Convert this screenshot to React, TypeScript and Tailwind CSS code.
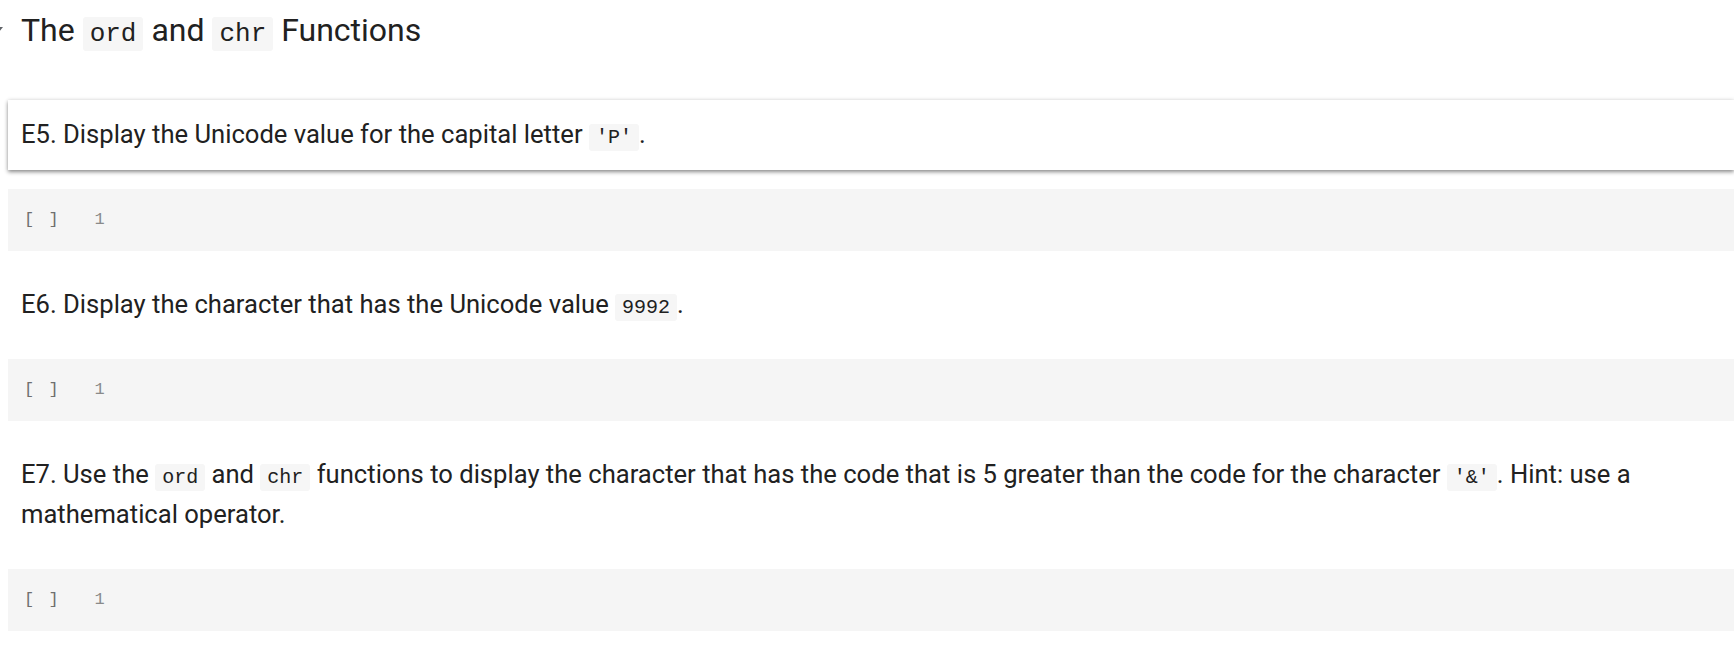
import React from 'react';

const mono = "font-['Liberation_Mono','DejaVu_Sans_Mono',monospace]";

function Code({ children, big }: { children: React.ReactNode; big?: boolean }) {
    return (
        <code
            className={`${mono} bg-[#f6f6f6] rounded-[3px] ${
                big ? 'text-[26px] leading-[28px] px-[7px] py-[2px]' : 'text-[20px] leading-[22px] px-[7px] py-[2px]'
            }`}
        >
            {children}
        </code>
    );
}

function TextCell({ children, selected }: { children: React.ReactNode; selected?: boolean }) {
    return (
        <div
            className={`ml-[8px] pl-[13px] pr-2 pt-[14px] pb-[16px] text-[25.6px] leading-[40px] text-[#212121] ${
                selected ? 'bg-white shadow-[0_2px_4px_rgba(0,0,0,0.45),0_-1px_4px_rgba(0,0,0,0.06)]' : ''
            }`}
        >
            {children}
        </div>
    );
}

function CodeCell() {
    return (
        <div className="ml-[8px] mt-[19px] mb-[19px] h-[62px] bg-[#f5f5f5] flex items-center">
            <span className={`${mono} text-[17px] text-[#6f6f6f] ml-[16px] tracking-[2px]`}>[ ]</span>
            <span className={`${mono} text-[17px] text-[#8a8a8a] ml-[34px]`}>1</span>
        </div>
    );
}

export default function App() {
    return (
        <div className="w-[1734px] h-[650px] overflow-hidden bg-white font-['Roboto','Liberation_Sans',sans-serif] relative">
            {/* collapse arrow, mostly cut off at the left edge */}
            <svg className="absolute left-[-6px] top-[26px]" width="10" height="8" viewBox="0 0 10 8">
                <path d="M1 1 L5 6 L9 1 Z" fill="#5f6368" />
            </svg>
            <div className="h-[100px] pl-[21px] pt-[8px]">
                <h2 className="text-[32px] leading-[44px] text-[#212121] font-normal">
                    The <Code big>ord</Code> and <Code big>chr</Code> Functions
                </h2>
            </div>
            <TextCell selected>
                E5. Display the Unicode value for the capital letter <Code>'P'</Code>.
            </TextCell>
            <CodeCell />
            <TextCell>
                E6. Display the character that has the Unicode value <Code>9992</Code>.
            </TextCell>
            <CodeCell />
            <TextCell>
                E7. Use the <Code>ord</Code> and <Code>chr</Code> functions to display the character that has the
                code that is 5 greater than the code for the character <Code>'&amp;'</Code>. Hint: use a
                <br />
                mathematical operator.
            </TextCell>
            <CodeCell />
        </div>
    );
}
